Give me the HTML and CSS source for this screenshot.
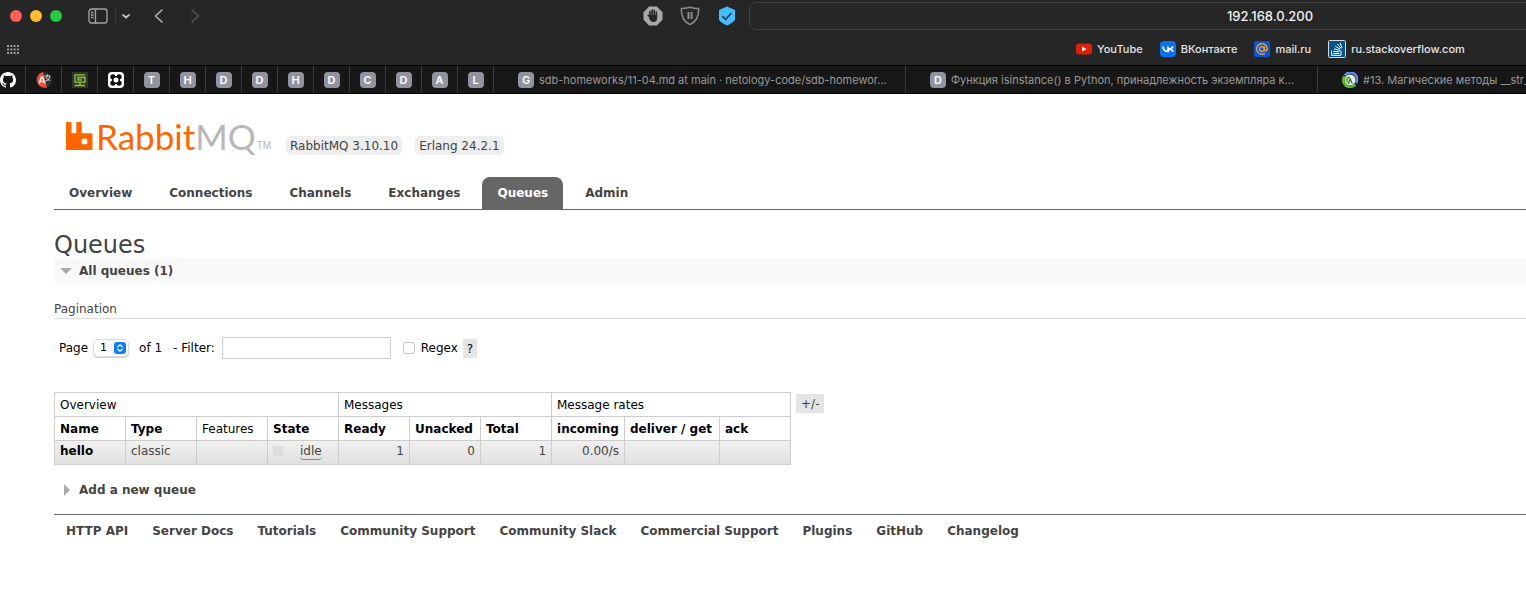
FILE: index.html
```html
<!DOCTYPE html>
<html lang="en">
<head>
<meta charset="utf-8">
<title>RabbitMQ Management</title>
<link rel="stylesheet" href="styles.css">
</head>
<body>
<header class="browser">
  <div class="toolbar">
    <div class="lights"><span class="light red"></span><span class="light yellow"></span><span class="light green"></span></div>
    <div class="side-controls">
      <button class="icon-btn" aria-label="Sidebar"><svg width="20" height="16" viewBox="0 0 20 16" fill="none" stroke="#a5a5a5" stroke-width="1.3"><rect x="1" y="1" width="18" height="14" rx="2.5"/><path d="M7.5 1v14M3 4.500h2.500M3 7h2.500M3 9.500h2.500"/></svg></button>
      <span class="divider"></span>
      <button class="icon-btn" aria-label="Tab groups"><svg width="10" height="16" viewBox="0 0 10 16" fill="none" stroke="#c4c4c4" stroke-width="1.700" stroke-linecap="round" stroke-linejoin="round"><path d="M2 7l3 2.500 3-2.500"/></svg></button>
    </div>
    <div class="history">
      <button class="icon-btn" aria-label="Back"><svg width="10" height="16" viewBox="0 0 10 16" fill="none" stroke="#b5b5b5" stroke-width="1.500" stroke-linecap="round" stroke-linejoin="round"><path d="M8 2L1.500 8 8 14"/></svg></button>
      <button class="icon-btn" aria-label="Forward"><svg width="10" height="16" viewBox="0 0 10 16" fill="none" stroke="#555" stroke-width="1.500" stroke-linecap="round" stroke-linejoin="round"><path d="M2 2l6.500 6L2 14"/></svg></button>
    </div>
    <div class="extensions">
      <button class="icon-btn" aria-label="Blocker"><svg width="20" height="20" viewBox="0 0 20 20"><path d="M6.200.5h7.600l5.700 5.700v7.600l-5.700 5.700H6.200L.5 13.800V6.200z" fill="#a9a9a9"/><g stroke="#252525" stroke-linecap="round" stroke-width="1.600" fill="none"><path d="M7 10V5.500M9.100 9V4M11.200 9V4.300M13.300 10V6M7.200 11.500L5.300 9.200"/></g><path d="M6.200 9h7.900v3c0 2.500-1.400 4-3.700 4-2 0-3-.9-4.200-3.500z" fill="#252525"/></svg></button>
      <button class="icon-btn" aria-label="Privacy"><svg width="20" height="20" viewBox="0 0 20 20" fill="none" stroke="#8c8c8c" stroke-width="1.500"><path d="M10 1.200c2.500.8 5.500 1.300 8.600 1.300.4 7.500-2.800 13.300-8.600 16.200C4.200 15.800 1 10 1.400 2.500 4.500 2.500 7.500 2 10 1.200z"/><path d="M8.500 6v7M11.600 6v7" stroke-width="2"/></svg></button>
      <button class="icon-btn" aria-label="Protection"><svg width="20" height="20" viewBox="0 0 20 20"><path d="M10 .5l8 3.500v9.500c0 1.500-4.500 4.500-8 6-3.500-1.500-8-4.500-8-6V4z" fill="#45bdfc"/><path d="M5.300 10.200l3.200 3.200 6-6.400" fill="none" stroke="#24435a" stroke-width="1.800"/></svg></button>
    </div>
    <div class="address">192.168.0.200</div>
  </div>
  <div class="bookmarks">
    <button class="icon-btn" aria-label="Favourites"><svg width="12" height="10" viewBox="0 0 12 10" stroke="#9b9b9b" stroke-width="2" stroke-dasharray="2 1.300"><path d="M0 2h12M0 5.500h12M0 9h12"/></svg></button>
    <nav class="bookmark-list">
      <a href="#"><svg width="16" height="16" viewBox="0 0 16 16"><rect y="2.500" width="16" height="11" rx="3" fill="#de2008"/><path d="M6.200 5.500v5l4.300-2.500z" fill="#fff"/></svg>YouTube</a>
      <a href="#"><svg width="16" height="16" viewBox="0 0 16 16"><rect width="16" height="16" rx="4" fill="#0873ec"/><path d="M3 5.500c.3 3.300 2 5 5 5v-5M13 5.500c-.7 1.500-2 2.500-5 2.500 3 0 4.500 1 5.200 2.700M8.500 8.500v2" fill="none" stroke="#fff" stroke-width="1.700"/></svg>ВКонтакте</a>
      <a href="#"><svg width="16" height="16" viewBox="0 0 16 16" fill="none" stroke="#f2a128" stroke-width="1.400"><rect width="16" height="16" rx="2" fill="#0854db" stroke="none"/><circle cx="8" cy="8" r="2.400"/><path d="M10.400 5.600v3c0 2 2.800 1.700 2.800-.6a5.300 5.300 0 1 0-2.300 4.300"/></svg>mail.ru</a>
      <a href="#"><svg width="18" height="18" viewBox="0 0 18 18" fill="none" stroke="#fff"><rect x=".5" y=".5" width="17" height="17" rx="1" fill="#07518c" stroke="#d5dce2"/><path d="M3.500 10.500v4.800h9.500v-4.800M5.300 13.500h6M5.400 11.300l6 .6M6 8.800l5.800 1.700M7.300 6.200l5 3.200M9.300 4l3.900 4.500M12 2.800l2 5.200"/></svg>ru.stackoverflow.com</a>
    </nav>
  </div>
  <nav class="tabs">
    <a class="pin first" href="#" aria-label="GitHub"><svg width="16" height="16" viewBox="0 0 16 16"><path fill="#fff" d="M8 0C3.580 0 0 3.580 0 8c0 3.540 2.290 6.530 5.470 7.590.4.070.55-.17.55-.38v-1.490c-2.010.37-2.530-.49-2.690-.94-.09-.23-.48-.94-.82-1.130-.28-.15-.68-.52-.01-.53.63-.01 1.080.58 1.230.82.72 1.210 1.870.87 2.330.66.070-.52.28-.87.51-1.070-1.780-.2-3.640-.89-3.640-3.950 0-.87.31-1.590.82-2.150-.08-.2-.36-1.020.080-2.120 0 0 .67-.21 2.200.82a7.600 7.600 0 0 1 4 0c1.530-1.040 2.200-.82 2.200-.82.44 1.100.16 1.920.080 2.120.51.56.82 1.270.82 2.150 0 3.070-1.870 3.750-3.650 3.950.29.25.54.73.54 1.480v2.200c0 .21.15.46.55.38A8 8 0 0 0 16 8c0-4.420-3.580-8-8-8z"/></svg></a>
    <a class="pin" href="#" aria-label="Translate"><svg width="16" height="16" viewBox="0 0 16 16" fill="none"><circle cx="8" cy="8" r="8" fill="#303032"/><path d="M7 0a8 8 0 1 0 4 15.500z" fill="#fb4a31"/><path d="M3 11.500L5.500 5h1L9 11.500M4 9.500h4" stroke="#fff" stroke-width="1.300"/><path d="M8.300 4h6M11.500 2.500v2M9.500 9c3-.5 4-2.500 4.200-4.500M10 5c.5 2 2 3 4 3.500" stroke="#ddd"/></svg></a>
    <a class="pin" href="#" aria-label="Lessons"><svg width="16" height="16" viewBox="0 0 16 16" fill="none"><path fill="#303630" d="M0 0h16v16H0z"/><path d="M13 2.800H3v7.400h10V5.500H6v2.300h4M8 10.500V13.300M3 13.500h10" stroke="#92cc28" stroke-width="1.300"/></svg></a>
    <a class="pin" href="#" aria-label="Netology"><svg width="16" height="16" viewBox="0 0 16 16"><rect width="16" height="16" rx="4" fill="#fff"/><g fill="#111"><circle cx="5" cy="5" r="2.700"/><circle cx="11" cy="5" r="2.700"/><circle cx="5" cy="11" r="2.700"/><circle cx="11" cy="11" r="2.700"/><path d="M5 3.500h6v9H5z"/><path d="M3.500 5h9v6h-9z"/></g><circle cx="8" cy="8" r="2.500" fill="#fff"/><g fill="#fff"><circle cx="8" cy="2.900" r="1.200"/><circle cx="8" cy="13.100" r="1.200"/><circle cx="2.900" cy="8" r="1.200"/><circle cx="13.100" cy="8" r="1.200"/></g></svg></a>
    <a class="pin" href="#"><span class="letter">T</span></a>
    <a class="pin" href="#"><span class="letter">H</span></a>
    <a class="pin" href="#"><span class="letter">D</span></a>
    <a class="pin" href="#"><span class="letter">D</span></a>
    <a class="pin" href="#"><span class="letter">H</span></a>
    <a class="pin" href="#"><span class="letter">D</span></a>
    <a class="pin" href="#"><span class="letter">C</span></a>
    <a class="pin" href="#"><span class="letter">D</span></a>
    <a class="pin" href="#"><span class="letter">A</span></a>
    <a class="pin" href="#"><span class="letter">L</span></a>
    <a class="tab" href="#"><span class="letter">G</span>sdb-homeworks/11-04.md at main · netology-code/sdb-homewor...</a>
    <a class="tab" href="#"><span class="letter">D</span>Функция isinstance() в Python, принадлежность экземпляра к...</a>
    <a class="tab" href="#"><svg width="16" height="16" viewBox="0 0 16 16" fill="none"><circle cx="8" cy="8" r="5.500" fill="#e4efec"/><path d="M2.800 3.500A6.700 6.700 0 0 1 14 11" stroke="#6688e0" stroke-width="2.600"/><path d="M2.500 4.200A6.700 6.700 0 0 0 13.300 12.200" stroke="#5fb52c" stroke-width="2.600"/><path d="M3.500 8.500c0-2.500 1.500-4 3.500-4L5.500 11.500z" fill="#5fb52c"/><path d="M6.500 5c2 0 2 5 4 6.500M8 7.500L6.300 12" stroke="#38682c" stroke-width="1.200"/></svg>#13. Магические методы __str_</a>
  </nav>
</header>

<main class="page">
  <div class="masthead">
    <a class="logo" href="#" aria-label="RabbitMQ home">
      <svg width="27" height="28" viewBox="0 0 27 28"><path fill="#f60" fill-rule="evenodd" d="M1 0h3.500q1 0 1 1v9.500q0 .8.800.8h3.200q.8 0 .8-.8V1q0-1 1-1h3.500q1 0 1 1v9.500q0 .8.800.8h8.900q1 0 1 1V27q0 1-1 1H1q-1 0-1-1V1q0-1 1-1zM17 16.700q-1.300 0-1.300 1.300v3q0 1.300 1.300 1.300h3q1.300 0 1.300-1.300v-3q0-1.300-1.300-1.300z"/></svg>
      <span class="wordmark">Rabbit<span class="mq">MQ</span></span><span class="tm">TM</span>
    </a>
    <span class="version">RabbitMQ 3.10.10</span>
    <span class="version">Erlang 24.2.1</span>
  </div>
  <nav class="menu">
    <a href="#">Overview</a>
    <a href="#">Connections</a>
    <a href="#">Channels</a>
    <a href="#">Exchanges</a>
    <a class="selected" href="#">Queues</a>
    <a href="#">Admin</a>
  </nav>

  <h1>Queues</h1>
  <h2 class="section open"><svg width="12" height="12" viewBox="0 0 12 12"><path d="M0 3h12L6 9z" fill="#aaa"/></svg>All queues (1)</h2>
  <h3>Pagination</h3>
  <form class="filter">
    <label for="page">Page</label>
    <span class="select-wrap">
      <select id="page"><option>1</option></select>
      <svg class="stepper" width="12" height="12" viewBox="0 0 12 12"><rect width="12" height="12" rx="3" fill="#0f7cf8"/><path d="M3.700 4.800L6 2.700l2.300 2.100M3.700 7.200L6 9.300l2.300-2.100" fill="none" stroke="#fff" stroke-width="1.200" stroke-linecap="round"/></svg>
    </span>
    <span class="of">of 1</span>
    <label for="name-filter">- Filter:</label>
    <input class="name-filter" id="name-filter" type="text">
    <input class="check" id="regex" type="checkbox">
    <label for="regex">Regex</label>
    <button class="help" type="button">?</button>
  </form>

  <div class="listing">
    <table>
      <colgroup><col span="7" class="col"><col class="col-in"><col class="col-get"><col class="col"></colgroup>
      <thead>
        <tr><th class="plain" colspan="4">Overview</th><th class="plain" colspan="3">Messages</th><th class="plain" colspan="3">Message rates</th></tr>
        <tr><th>Name</th><th>Type</th><th class="plain">Features</th><th>State</th><th>Ready</th><th>Unacked</th><th>Total</th><th>incoming</th><th>deliver / get</th><th>ack</th></tr>
      </thead>
      <tbody>
        <tr><td><a class="queue" href="#">hello</a></td><td>classic</td><td></td><td><span class="state"><span class="swatch"></span><abbr>idle</abbr></span></td><td class="num">1</td><td class="num">0</td><td class="num">1</td><td class="num">0.00/s</td><td></td><td></td></tr>
      </tbody>
    </table>
    <button class="columns" type="button">+/-</button>
  </div>

  <h2 class="section"><svg width="12" height="12" viewBox="0 0 12 12"><path d="M4 0v12l6-6z" fill="#aaa"/></svg>Add a new queue</h2>
  <footer class="footer">
    <a href="#">HTTP API</a>
    <a href="#">Server Docs</a>
    <a href="#">Tutorials</a>
    <a href="#">Community Support</a>
    <a href="#">Community Slack</a>
    <a href="#">Commercial Support</a>
    <a href="#">Plugins</a>
    <a href="#">GitHub</a>
    <a href="#">Changelog</a>
  </footer>
</main>
</body>
</html>
```
FILE: styles.css
```css
* { box-sizing: border-box; }

body {
  margin: 0;
  background: #fff;
  color: #444;
  font: 12px/16px Verdana, "DejaVu Sans", sans-serif;
  overflow-x: hidden;
}

a { color: inherit; text-decoration: none; }
button, input, select { font: inherit; color: inherit; }
svg { display: block; flex: none; }

/* Browser chrome */
.browser {
  background: #262626;
  font-family: Inter, sans-serif;
  overflow: hidden;
}
.toolbar { display: flex; align-items: center; height: 32px; padding-left: 10px; }
.lights { display: flex; gap: 8px; }
.light { width: 12px; height: 12px; border-radius: 50%; }
.red { background: #ff5f57; }
.yellow { background: #febc2e; }
.green { background: #28c840; }
.icon-btn { padding: 0; border: 0; background: none; }
.side-controls { display: flex; align-items: center; margin-left: 26px; }
.divider { width: 1px; height: 18px; margin: 0 5px 0 7px; background: #3a3a3a; }
.history { display: flex; gap: 26px; margin-left: 23px; }
.extensions { display: flex; gap: 17px; margin-left: 443px; }
.address {
  flex: 0 0 1042px;
  height: 28px;
  margin-left: 12px;
  border: 1px solid #424242;
  border-radius: 7px;
  color: #f0f0f0;
  font-size: 13px;
  font-weight: 500;
  line-height: 26px;
  text-align: center;
}
.bookmarks { display: flex; align-items: center; height: 33px; padding-left: 7px; }
.bookmark-list { display: flex; gap: 17px; margin-left: 1057px; white-space: nowrap; }
.bookmark-list a {
  display: flex;
  align-items: center;
  gap: 5px;
  color: #e4e4e4;
  font-size: 11px;
  font-weight: 500;
}
.tabs {
  display: flex;
  height: 29px;
  border-top: 1px solid #000;
  border-bottom: 1px solid #000;
  background: #171717;
}
.pin, .tab {
  display: flex;
  flex: none;
  align-items: center;
  border-right: 1px solid #3a3a3a;
}
.pin { width: 36px; justify-content: center; }
.first { width: 26px; justify-content: flex-start; }
.tab {
  width: 412px;
  gap: 5px;
  padding-left: 24px;
  color: #989898;
  font-size: 11px;
  white-space: nowrap;
}
.letter {
  width: 16px;
  height: 16px;
  border-radius: 4px;
  background: #9193a0;
  color: #fff;
  font-size: 11px;
  font-weight: 600;
  line-height: 17px;
  text-align: center;
}

/* Management page */
.page { padding: 28px 0 0 54px; }
.masthead { display: flex; align-items: flex-end; gap: 12px; height: 33px; padding-left: 12px; }
.logo { display: flex; align-items: flex-start; width: 208px; height: 33px; color: #f60; }
.wordmark {
  margin-left: 3px;
  font: 35px/28px Lato, "Open Sans", sans-serif;
}
.mq { color: #b7b7b7; }
.tm {
  margin: 18px 0 0 1px;
  color: #b7b7b7;
  font: 10px/12px "Liberation Sans", sans-serif;
}
.version { padding: 2px 4px 1px; border-radius: 5px; background: #eee; }
.version + .version { margin-left: 1px; }
.menu { display: flex; gap: 7px; margin-top: 22px; border-bottom: 1px solid #666; }
.menu a { padding: 8px 15px; border-radius: 8px 8px 0 0; font-weight: bold; }
.menu .selected { background: #666; color: #fff; }

h1 { margin: 22px 0 0; font-size: 24px; font-weight: normal; line-height: 26px; }
.section {
  display: flex;
  align-items: center;
  gap: 7px;
  margin: 0;
  padding: 5px 6px 4px;
  font-size: 12px;
}
.open { background: #f8f8f8; }
h3 {
  margin: 18px 0;
  padding-bottom: 1px;
  border-bottom: 1px solid #ddd;
  font-size: 12px;
  font-weight: normal;
}
.filter { display: flex; align-items: center; padding-left: 5px; color: #000; }
.select-wrap { position: relative; margin-left: 5px; }
.select-wrap select {
  display: block;
  width: 36px;
  height: 18px;
  padding: 0 0 0 6px;
  border: 1px solid #ddd;
  border-radius: 5px;
  background: #fff;
  box-shadow: 0 1px 1px #ccc;
  font-size: 11px;
  appearance: none;
}
.stepper { position: absolute; top: 3px; right: 3px; pointer-events: none; }
.of { margin: 0 11px 0 10px; }
.name-filter { width: 169px; height: 22px; margin: 0 0 0 7px; border: 1px solid #ccc; }
.check {
  width: 12px;
  height: 12px;
  margin: 0 6px 0 12px;
  border: 1px solid #c4c4c4;
  border-radius: 3px;
  appearance: none;
}
.help, .columns { padding: 2px 4px 1px; border: 0; background: #e4e4e4; line-height: 16px; }
.help { margin-left: 5px; }
.columns { padding: 2px 5px 1px; }

.listing { display: flex; align-items: flex-start; gap: 5px; margin: 33px 0 12px; }
.columns { margin-top: 2px; }
table { width: 737px; border-collapse: collapse; table-layout: fixed; color: #000; }
.col { width: 71px; }
.col-in { width: 73px; }
.col-get { width: 95px; }
th, td { height: 24px; padding: 0 5px; border: 1px solid #ccc; text-align: left; white-space: nowrap; }
td { padding-bottom: 3px; color: #444; }
tbody tr { background: linear-gradient(#f0f0f0, #dfdfdf); }
.plain { font-weight: normal; }
.num { text-align: right; }
.queue { color: #000; font-weight: bold; }
.state { display: flex; align-items: center; gap: 17px; }
.swatch { width: 10px; height: 10px; background: #ddd; }
abbr { border-bottom: 1px solid #888; border-radius: 4px; line-height: 16px; }

.footer { display: flex; gap: 24px; margin-top: 12px; padding: 8px 12px; border-top: 1px solid #666; font-weight: bold; white-space: nowrap; }
```
